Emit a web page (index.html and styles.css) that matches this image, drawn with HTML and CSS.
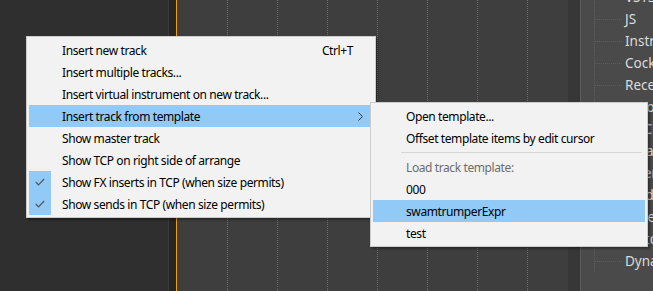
FILE: index.html
```html
<!DOCTYPE html>
<html>
<head>
  <meta charset="UTF-8">
  <title>Track context menu</title>
  <link rel="stylesheet" href="styles.css">
</head>
<body>
  <div class="workspace">
    <div class="tcp"></div>
    <div class="tcp-edge"></div>
    <div class="cursor"></div>
    <div class="arrange">
      <div class="beat"></div>
      <div class="beat"></div>
      <div class="beat"></div>
      <div class="beat"></div>
      <div class="beat"></div>
      <div class="beat"></div>
      <div class="beat"></div>
    </div>
    <div class="gutter"></div>
    <div class="browser">
      <ul class="tree">
        <li>VST3</li>
        <li>JS</li>
        <li>Instruments</li>
        <li>Cockos</li>
        <li>Recent</li>
        <li>Favorites</li>
        <li>FX Chains</li>
        <li>Delay</li>
        <li>Filter</li>
        <li>Modulation</li>
        <li>Reverb</li>
        <li>Distortion</li>
        <li>Dynamics</li>
      </ul>
    </div>
  </div>

  <div class="menu main-menu">
    <div class="item"><span class="label">Insert new track</span><span class="key">Ctrl+T</span></div>
    <div class="item"><span class="label">Insert multiple tracks...</span></div>
    <div class="item"><span class="label">Insert virtual instrument on new track...</span></div>
    <div class="item active">
      <span class="label">Insert track from template</span>
      <svg class="arrow" width="5" height="9" viewBox="0 0 5 9"><polyline points="0.5,0.5 4.5,4.5 0.5,8.5" fill="none" stroke="#333" stroke-width="1"/></svg>
    </div>
    <div class="item"><span class="label">Show master track</span></div>
    <div class="item"><span class="label">Show TCP on right side of arrange</span></div>
    <div class="item checked">
      <span class="check"><svg width="10" height="8" viewBox="0 0 10 8"><polyline points="0.8,4 3.5,6.8 9.2,1" fill="none" stroke="#555" stroke-width="1.2"/></svg></span>
      <span class="label">Show FX inserts in TCP (when size permits)</span>
    </div>
    <div class="item checked">
      <span class="check"><svg width="10" height="8" viewBox="0 0 10 8"><polyline points="0.8,4 3.5,6.8 9.2,1" fill="none" stroke="#555" stroke-width="1.2"/></svg></span>
      <span class="label">Show sends in TCP (when size permits)</span>
    </div>
  </div>

  <div class="menu sub-menu">
    <div class="item"><span class="label">Open template...</span></div>
    <div class="item"><span class="label">Offset template items by edit cursor</span></div>
    <div class="separator"></div>
    <div class="item disabled"><span class="label">Load track template:</span></div>
    <div class="item"><span class="label">000</span></div>
    <div class="item active"><span class="label">swamtrumperExpr</span></div>
    <div class="item"><span class="label">test</span></div>
  </div>
</body>
</html>
```

FILE: styles.css
```css
html, body {
  margin: 0;
  padding: 0;
  height: 100%;
  overflow: hidden;
}
body {
  background: #2f2f2f;
  font-family: "Noto Sans", "Liberation Sans", sans-serif;
}
.workspace {
  display: flex;
  height: 291px;
}
.tcp {
  width: 168px;
  background: #2f2f2f;
  border-right: 1px solid #3b3b3b;
}
.tcp-edge {
  width: 7px;
  background: #262626;
}
.cursor {
  width: 1px;
  background: #f5a000;
}
.arrange {
  display: flex;
  width: 391px;
  padding-left: 50px;
  box-sizing: border-box;
  background: #3e3e3e;
}
.beat {
  width: 50px;
  flex: none;
  box-sizing: border-box;
  border-left: 1px dotted #6c6c6c;
}
.gutter {
  width: 12px;
  background: #373737;
}
.browser {
  flex: 1;
  background: #4a4a4a;
  border-left: 1px solid #5c5c5c;
  overflow: hidden;
}
.tree {
  list-style: none;
  margin: -14px 0 0 13px;
  padding: 0;
  border-left: 1px dotted #5d5d5d;
}
.tree li {
  display: flex;
  align-items: center;
  height: 22px;
  color: #dcdcdc;
  font-size: 13.5px;
  white-space: nowrap;
}
.tree li::before {
  content: "";
  width: 27px;
  margin-right: 3px;
  border-top: 1px dotted #5d5d5d;
  flex: none;
}

.menu {
  position: absolute;
  background: #f2f2f2;
  border: 1px solid #cccccc;
  padding: 2px;
  box-shadow: 2px 2px 2px rgba(0, 0, 0, 0.35);
  font-size: 12px;
  letter-spacing: -0.4px;
  color: #000;
}
.main-menu {
  left: 26px;
  top: 36px;
  width: 344px;
}
.sub-menu {
  left: 370px;
  top: 102px;
  width: 272px;
}
.item {
  display: flex;
  align-items: center;
  height: 22px;
  padding-left: 33px;
  position: relative;
  white-space: nowrap;
}
.item .label {
  flex: 1;
}
.item .key {
  margin-right: 20px;
}
.item.active {
  background: #91c9f7;
}
.item.disabled {
  color: #6d6d6d;
}
.arrow {
  margin-right: 10px;
}
.check {
  position: absolute;
  left: 0;
  top: 0;
  width: 22px;
  height: 22px;
  background: #91c9f7;
  display: flex;
  align-items: center;
  justify-content: center;
}
.separator {
  height: 1px;
  margin: 3px 3px 3px 28px;
  background: #d5d5d5;
}
```
